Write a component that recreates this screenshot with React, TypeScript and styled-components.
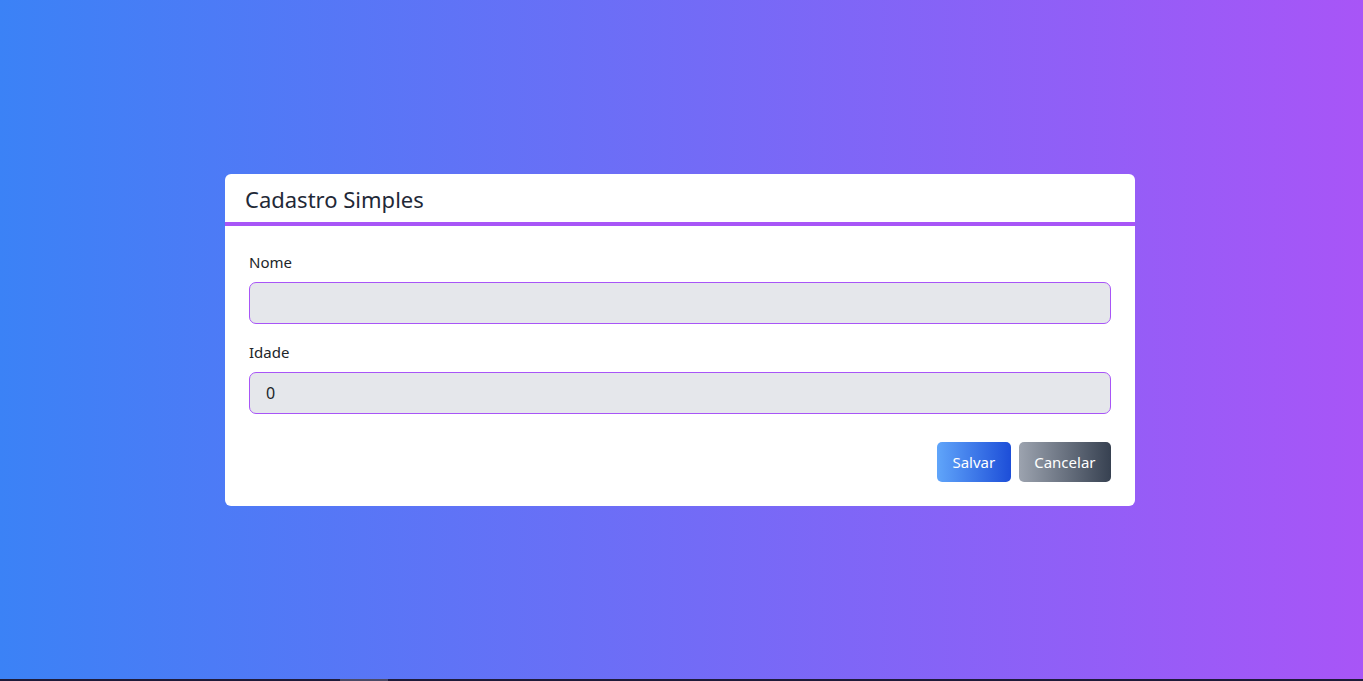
import React from "react";
import styled, { createGlobalStyle } from "styled-components";

const Global = createGlobalStyle`
  html, body { margin: 0; padding: 0; }
  body { font-family: "Noto Sans", "Open Sans", sans-serif; color: #212529; }
  * { box-sizing: border-box; }
`;

const Page = styled.div`
  display: flex;
  flex-direction: column;
  height: 681px;
  width: 1363px;
  overflow: hidden;
`;

const Stage = styled.main`
  flex: 1;
  display: flex;
  align-items: center;
  justify-content: center;
  padding: 1px 3px 0 0;
  background: linear-gradient(90deg, #3b82f6 0%, #a855f7 100%);
`;

const Strip = styled.div`
  height: 2px;
  background: #1e1b3a;
  display: flex;
`;

const StripThumb = styled.span`
  margin-left: 340px;
  width: 48px;
  background: #4b4a66;
`;

const Card = styled.section`
  width: 910px;
  background: #fff;
  border-radius: 6px;
  overflow: hidden;
`;

const Header = styled.header`
  height: 52px;
  padding: 0 20px;
  display: flex;
  align-items: center;
  border-bottom: 4px solid #a855f7;
`;

const Title = styled.h1`
  margin: 0;
  font-size: 22px;
  font-weight: 400;
  color: #1f2937;
  padding-top: 2px;
`;

const Body = styled.form`
  padding: 28px 24px 24px;
  display: flex;
  flex-direction: column;
`;

const Field = styled.div`
  display: flex;
  flex-direction: column;
  gap: 12px;
  margin-bottom: 20px;
`;

const Label = styled.label`
  font-size: 15px;
  color: #212529;
  line-height: 16px;
`;

const Input = styled.input`
  height: 42px;
  border: 1px solid #a855f7;
  border-radius: 7px;
  background: #e5e7eb;
  padding: 0 16px;
  font-family: inherit;
  font-size: 16px;
  color: #212529;
  outline: none;
`;

const Actions = styled.div`
  display: flex;
  justify-content: flex-end;
  gap: 8px;
  margin-top: 8px;
`;

const Button = styled.button<{ $variant: "primary" | "secondary" }>`
  height: 40px;
  padding: 0 15.5px;
  border: none;
  border-radius: 5px;
  color: #fff;
  font-family: inherit;
  font-size: 15px;
  background: ${(p) =>
    p.$variant === "primary"
      ? "linear-gradient(90deg, #60a5fa 0%, #1d4ed8 100%)"
      : "linear-gradient(90deg, #9ca3af 0%, #374151 100%)"};
`;

export default function App() {
  return (
    <Page>
      <Global />
      <Stage>
        <Card>
          <Header>
            <Title>Cadastro Simples</Title>
          </Header>
          <Body onSubmit={(e) => e.preventDefault()}>
            <Field>
              <Label htmlFor="nome">Nome</Label>
              <Input id="nome" type="text" defaultValue="" />
            </Field>
            <Field>
              <Label htmlFor="idade">Idade</Label>
              <Input id="idade" type="text" defaultValue="0" />
            </Field>
            <Actions>
              <Button type="submit" $variant="primary">Salvar</Button>
              <Button type="button" $variant="secondary">Cancelar</Button>
            </Actions>
          </Body>
        </Card>
      </Stage>
      <Strip>
        <StripThumb />
      </Strip>
    </Page>
  );
}
